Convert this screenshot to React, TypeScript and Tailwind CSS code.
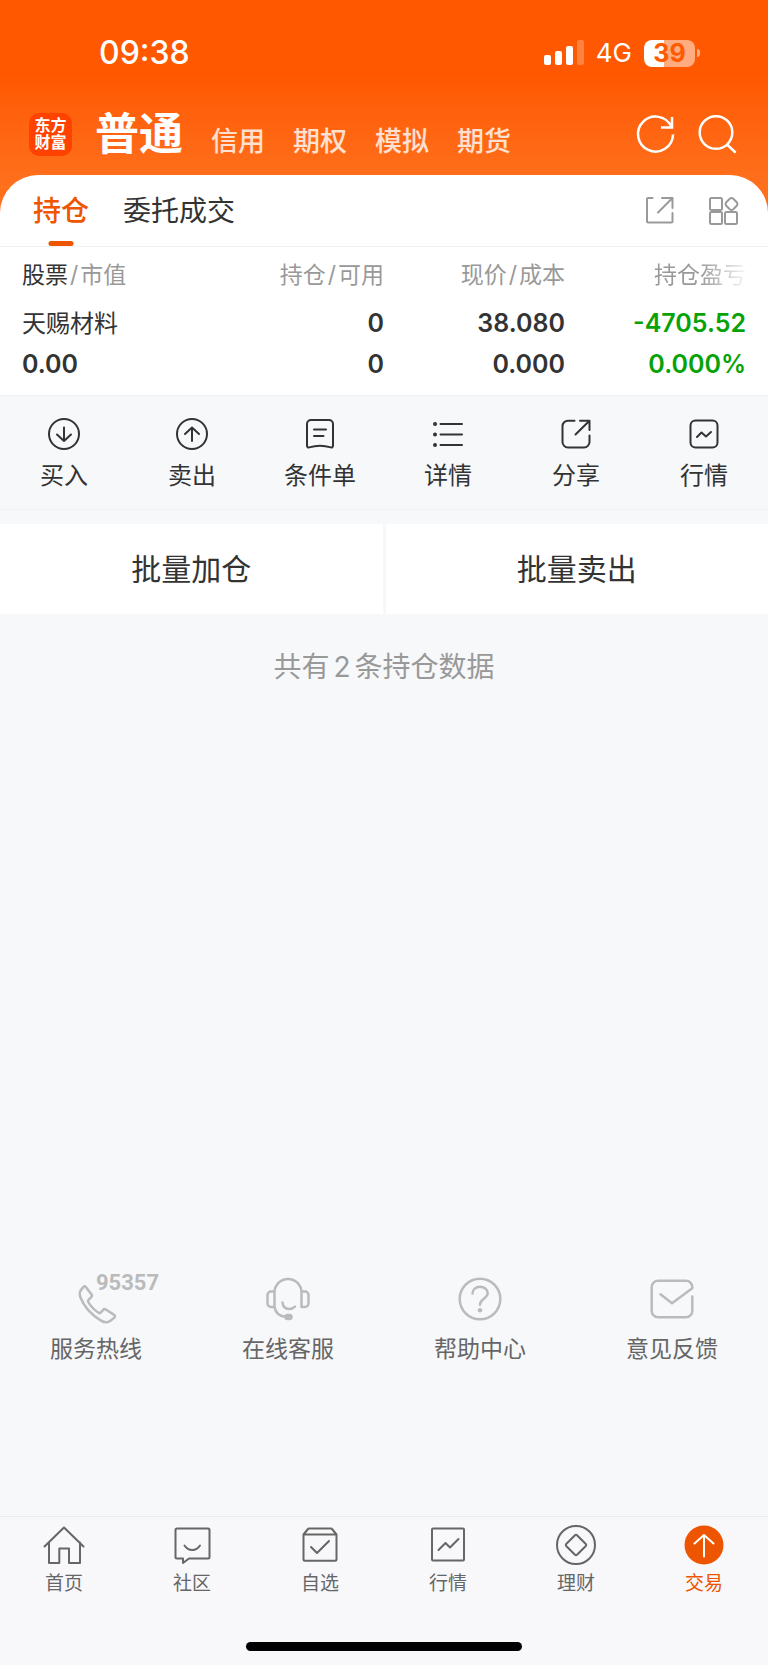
import { type ReactNode } from "react";

interface IconProps {
  size: number;
  strokeWidth?: number;
  children: ReactNode;
}

function Icon({ size, strokeWidth = 2, children }: IconProps) {
  return (
    <svg
      width={size}
      height={size}
      viewBox={`0 0 ${size} ${size}`}
      fill="none"
      stroke="currentColor"
      strokeWidth={strokeWidth}
      strokeLinecap="round"
      strokeLinejoin="round"
      aria-hidden="true"
      className="shrink-0 overflow-visible"
    >
      {children}
    </svg>
  );
}

const accounts = ["信用", "期权", "模拟", "期货"];

const actions = [
  {
    label: "买入",
    icon: (
      <>
        <circle cx="16" cy="16" r="15" />
        <path d="M16 9.5V23M9 16.5l7 6.5 7-6.5" />
      </>
    ),
  },
  {
    label: "卖出",
    icon: (
      <>
        <circle cx="16" cy="16" r="15" />
        <path d="M16 23V9.5M9 16l7-6.5 7 6.5" />
      </>
    ),
  },
  {
    label: "条件单",
    icon: (
      <>
        <path d="M3 6a4 4 0 0 1 4-4h18a4 4 0 0 1 4 4v21.7c0 1.2-1 2-2.2 1.7Q16 26 5.2 29.4C4 29.7 3 28.9 3 27.7z" />
        <path d="M10 11.5h12M10 18h9.5" />
      </>
    ),
  },
  {
    label: "详情",
    icon: (
      <>
        <path d="M8.5 6H30M8.5 16.5H30M8.5 27H30" />
        <path d="M3 6h.01M3 16.5h.01M3 27h.01" strokeWidth="4" />
      </>
    ),
  },
  {
    label: "分享",
    icon: (
      <>
        <path d="M14.5 2.7H8A5.5 5.5 0 0 0 2.5 8.2V24A5.5 5.5 0 0 0 8 29.5h16a5.5 5.5 0 0 0 5.5-5.5v-6.5" />
        <path d="M20 2.7h9.5V12M29 3.2 15.5 16.5" />
      </>
    ),
  },
  {
    label: "行情",
    icon: (
      <>
        <rect x="2.5" y="2.5" width="27" height="27" rx="5" />
        <path d="m9 19 4.5-4.5 4.5 4 5-4.5" />
      </>
    ),
  },
];

const services = [
  {
    label: "服务热线",
    badge: "95357",
    icon: (
      <path d="M11 12.5c1-1.5 2-1.5 3-.3l5.5 7.3c.8 1.1.6 1.8-.3 2.7l-2.7 2.6c-.7.7-.7 1.3-.2 2.2 2.6 4.6 6 8 10.3 10.8.9.6 1.5.5 2.2-.3l2.4-2.7c.8-.9 1.5-1 2.6-.3l8.3 5.4c1.2.8 1.2 1.7.2 2.7-5.3 5-8.3 6-13.3 3C19.5 39.8 11.5 30.7 8.3 22 6.7 17.5 8.3 15.8 11 12.5z" />
    ),
  },
  {
    label: "在线客服",
    icon: (
      <>
        <path d="M10.5 32V17.5A13.5 13.5 0 0 1 24 4a13.5 13.5 0 0 1 13.5 13.5V32H41a3.500 3.500 0 0 0 3.500-3.500V20a3.500 3.500 0 0 0-3.500-3.500h-3.500M10.500 16.500H7A3.500 3.500 0 0 0 3.500 20v8.500A3.500 3.500 0 0 0 7 32h3.500c1 5.500 4.500 9 10.500 9.700" />
        <path d="M18.500 27.500c.5 4 3 6.500 6.500 6.500 2.500 0 4.500-.8 6-2.300" />
        <rect x="21.5" y="40" width="6" height="4" rx="2" fill="currentColor" />
      </>
    ),
  },
  {
    label: "帮助中心",
    icon: (
      <>
        <circle cx="24" cy="24" r="20.3" />
        <path d="M16.5 18.5c0-4 3.4-6.8 7.500-6.800s7.700 2.700 7.700 6.600c0 5.200-7.700 5.200-7.700 11.500" />
        <path d="M24 35.3h.01" strokeWidth="4.5" />
      </>
    ),
  },
  {
    label: "意见反馈",
    icon: (
      <path d="M44.3 21.5V36a6.300 6.300 0 0 1-6.300 6.300H10A6.300 6.300 0 0 1 3.700 36V12A6.300 6.300 0 0 1 10 5.700h28a6.300 6.300 0 0 1 6.300 6.300v1.300L24 28.300l-11.500-9" />
    ),
  },
];

const navItems = [
  {
    label: "首页",
    icon: <path d="M.5 21.5 20 2.5l19.5 19M5 17.5V38h10.3V23.5H25V38h11V17.5" />,
  },
  {
    label: "社区",
    icon: (
      <>
        <path d="M5 3.5h31A1.5 1.5 0 0 1 37.5 5v27a1.5 1.5 0 0 1-1.5 1.5H17L11 38v-4.5H5A1.5 1.5 0 0 1 3.5 32V5A1.5 1.5 0 0 1 5 3.500z" />
        <path d="M12.5 20.5c4 6 11.5 6 15.5 0" />
      </>
    ),
  },
  {
    label: "自选",
    icon: (
      <>
        <path d="M3.5 9.5h33v24.7a1.5 1.5 0 0 1-1.5 1.5H5a1.5 1.5 0 0 1-1.5-1.5zL8 4q.3-.5 1-.5h22q.7 0 1 .5l4.5 5.5" />
        <path d="m11 22 6 6 12-12" />
      </>
    ),
  },
  {
    label: "行情",
    icon: (
      <>
        <rect x="4" y="3.5" width="32" height="32" rx="1" />
        <path d="m10.500 25 7-7 4.500 4.500 8.500-8.500" />
      </>
    ),
  },
  {
    label: "理财",
    icon: (
      <>
        <circle cx="20" cy="20" r="19" />
        <path d="M19 10.2q1-.9 2 0l8.800 8.800q.9 1 0 2L21 29.800q-1 .9-2 0L10.200 21q-.9-1 0-2z" />
      </>
    ),
  },
];

function StatusBar() {
  return (
    <div className="flex h-12 items-center justify-between pr-[68px] pl-[99px]">
      <span className="text-[32px] leading-10 font-medium">09:38</span>
      <div className="flex items-center gap-3">
        <svg width="40" height="26" viewBox="0 0 40 26" fill="currentColor" aria-hidden="true">
          <rect x="0" y="15" width="7" height="10" rx="2" />
          <rect x="11" y="11" width="7" height="14" rx="2" />
          <rect x="22" y="6" width="7" height="19" rx="2" />
          <rect x="33" y="0" width="7" height="25" rx="2" opacity="0.25" />
        </svg>
        <span className="text-[26px] leading-8">4G</span>
        <div className="flex items-center gap-0.5">
          <span className="flex h-[27px] w-[51px] items-center justify-center rounded-lg bg-linear-to-r from-white from-40% to-white/50 to-40% text-[25px] leading-none font-bold text-[#ff5a00]">
            39
          </span>
          <span className="h-2 w-[3px] rounded-r-full bg-white/50" />
        </div>
      </div>
    </div>
  );
}

function AccountBar() {
  return (
    <div className="flex items-center justify-between pt-[30px] pr-8 pb-3.5 pl-[29px]">
      <div className="flex items-center">
        <span className="grid size-[43px] place-content-center rounded-[10px] bg-[#ff4200] text-center text-base leading-[17px] font-bold">
          东方
          <br />
          财富
        </span>
        <nav className="flex items-end gap-7 pl-[23px]">
          <a href="#cash" className="text-[44px] leading-[54px] font-bold">
            普通
          </a>
          {accounts.map((name) => (
            <a key={name} href="#account" className="text-[27px] leading-[38px] font-medium text-white/80">
              {name}
            </a>
          ))}
        </nav>
      </div>
      <div className="flex gap-6">
        <button type="button" aria-label="刷新">
          <Icon size={38} strokeWidth={2.5}>
            <path
              d="M37 19.5A17.5 17.5 0 1 1 35.5 12M36 2v10.500H25"
              strokeLinecap="butt"
              strokeLinejoin="miter"
            />
          </Icon>
        </button>
        <button type="button" aria-label="搜索">
          <Icon size={38} strokeWidth={2.5}>
            <circle cx="18" cy="17.5" r="16.3" />
            <path d="m29.500 30 7.500 7" />
          </Icon>
        </button>
      </div>
    </div>
  );
}

function PositionTabs() {
  return (
    <div className="flex h-[72px] items-center justify-between rounded-t-[38px] border-b border-[#f2f2f4] bg-white pr-[30px] pl-[33px] text-[#333]">
      <nav className="flex h-full items-center gap-[34px] text-[28px]">
        <a href="#position" className="relative flex h-full items-center font-medium text-[#ee5500]">
          持仓
          <span className="absolute bottom-0 left-1/2 h-[5px] w-[25px] -translate-x-1/2 rounded-sm bg-[#ee5500]" />
        </a>
        <a href="#orders">委托成交</a>
      </nav>
      <div className="flex gap-[35px] text-[#999]">
        <button type="button" aria-label="打开">
          <Icon size={29}>
            <path d="M7.5 2H3a1 1 0 0 0-1 1v22.5a1 1 0 0 0 1 1h23.5a1 1 0 0 0 1-1V17M17 2h10.5v10M27 2.500 13 16.500" />
          </Icon>
        </button>
        <button type="button" aria-label="更多">
          <Icon size={29}>
            <rect x="1" y="2" width="12" height="12" rx="1.5" />
            <rect x="1" y="16" width="12" height="12" rx="1.5" />
            <rect x="16" y="16" width="12" height="12" rx="1.5" />
            <path d="M21 2.500q1.500-1 3 0l4 4q1 1.500 0 3l-4 4q-1.500 1-3 0l-4-4q-1-1.500 0-3z" />
          </Icon>
        </button>
      </div>
    </div>
  );
}

function PositionTable() {
  return (
    <div className="bg-white px-[22px] pb-2.5">
      <table className="w-full table-fixed text-right text-[25px] leading-[41px] font-semibold text-[#333]">
        <thead>
          <tr className="h-14 text-[23px] leading-8 text-[#999]">
            <th className="text-left font-normal">
              <span className="text-[#333]">股票</span>
              <span className="px-0.5">/</span>市值
            </th>
            <th className="font-normal">
              持仓<span className="px-0.5">/</span>可用
            </th>
            <th className="font-normal">
              现价<span className="px-0.5">/</span>成本
            </th>
            <th className="font-normal">
              <span className="mask-r-from-50% mask-r-to-105%">持仓盈亏</span>
            </th>
          </tr>
        </thead>
        <tbody>
          <tr>
            <td className="text-left">
              <div className="text-2xl leading-[41px] font-normal">天赐材料</div>
              <div>0.00</div>
            </td>
            <td>
              <div>0</div>
              <div>0</div>
            </td>
            <td>
              <div>38.080</div>
              <div>0.000</div>
            </td>
            <td className="text-[#06a206]">
              <div>-4705.52</div>
              <div>0.000%</div>
            </td>
          </tr>
        </tbody>
      </table>
    </div>
  );
}

function BottomNav() {
  return (
    <footer className="border-t border-[#e8ecee] bg-[#f8f8fb] pt-2">
      <nav className="grid grid-cols-6 text-[19px] leading-7 text-[#666]">
        {navItems.map((item) => (
          <a key={item.label} href="#nav" className="flex flex-col items-center gap-[5px]">
            <Icon size={40}>{item.icon}</Icon>
            {item.label}
          </a>
        ))}
        <a href="#trade" aria-current="page" className="flex flex-col items-center gap-[5px] text-[#ee5500]">
          <Icon size={40}>
            <circle cx="20" cy="20" r="19.5" fill="currentColor" stroke="none" />
            <path d="M20 31.5V10M10.5 18.5 20 10l9.5 8.500" stroke="#fff" />
          </Icon>
          交易
        </a>
      </nav>
      <div className="mx-auto mt-11 mb-3.5 h-[9px] w-9/25 rounded-full bg-black" />
    </footer>
  );
}

export default function App() {
  return (
    <div className="flex min-h-screen flex-col bg-[#f7f8fa] font-[Inter,'Noto_Sans_CJK_SC',sans-serif] text-[#333]">
      <header className="bg-linear-to-b from-[#ff5800] from-30% to-[#ff701c] to-75% pt-[29px] text-white">
        <StatusBar />
        <AccountBar />
        <PositionTabs />
      </header>

      <main className="flex flex-1 flex-col">
        <PositionTable />

        <div className="grid grid-cols-6 border-y border-[#f0f1f3] pt-[22px] pb-4 text-2xl">
          {actions.map((action) => (
            <button key={action.label} type="button" className="flex flex-col items-center gap-[9px]">
              <Icon size={32}>{action.icon}</Icon>
              <span className="leading-[34px]">{action.label}</span>
            </button>
          ))}
        </div>

        <div className="mt-3.5 grid grid-cols-2 gap-[3px] text-[30px]">
          <button type="button" className="h-[90px] bg-white">
            批量加仓
          </button>
          <button type="button" className="h-[90px] bg-white">
            批量卖出
          </button>
        </div>

        <p className="pt-8 text-center text-[28px] leading-[42px] text-[#999]">
          共有<span className="px-1">2</span>条持仓数据
        </p>

        <div className="mt-auto grid grid-cols-4 pt-16 pb-[151px] text-[23px] text-[#666]">
          {services.map((service) => (
            <a key={service.label} href="#service" className="flex flex-col items-center gap-2.5">
              <span className="relative text-[#bbb]">
                <Icon size={48} strokeWidth={2.5}>
                  {service.icon}
                </Icon>
                {service.badge && (
                  <span className="absolute -top-1 left-6 font-[Roboto,sans-serif] text-[22px] leading-6 font-bold">
                    {service.badge}
                  </span>
                )}
              </span>
              <span className="leading-8">{service.label}</span>
            </a>
          ))}
        </div>
      </main>

      <BottomNav />
    </div>
  );
}
